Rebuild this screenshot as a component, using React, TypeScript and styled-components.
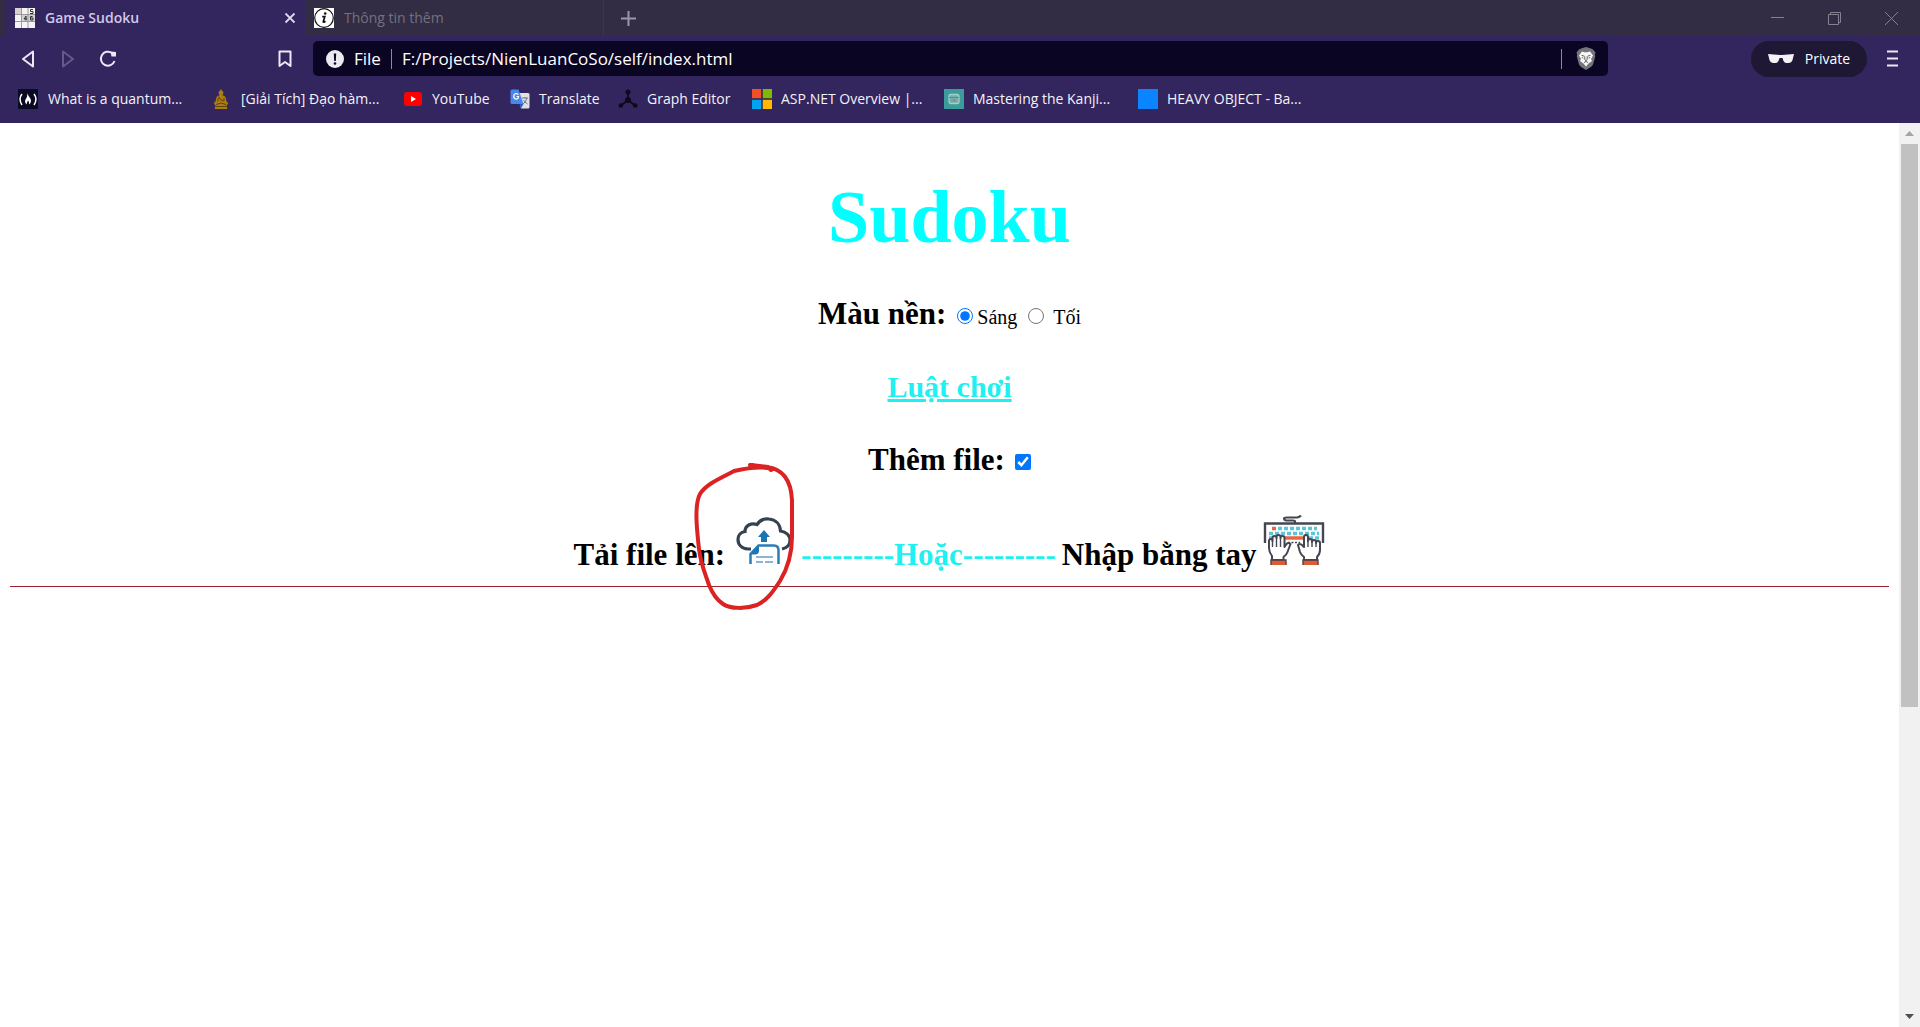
import React from "react";
import styled, { createGlobalStyle, css } from "styled-components";

const ui = `"Open Sans", "Noto Sans", sans-serif`;
const serif = `"Liberation Serif", "Times New Roman", serif`;

const Global = createGlobalStyle`
  *, *::before, *::after { box-sizing: border-box; }
  html, body, #root { height: 100%; }
  body { margin: 0; overflow: hidden; background: #fff; }
  button { border: 0; padding: 0; background: none; color: inherit; font: inherit; }
  svg { display: block; flex: none; }
`;

const Window = styled.div`
  display: flex;
  flex-direction: column;
  height: 100vh;
`;

const TabStrip = styled.header`
  display: flex;
  align-items: stretch;
  height: 36px;
  padding-left: 5px;
  background: #322d44;
  font-family: ${ui};
  font-size: 14px;
`;

const Tab = styled.div<{ $active?: boolean }>`
  display: flex;
  align-items: center;
  gap: 10px;
  width: ${(p) => (p.$active ? 300 : 299)}px;
  padding: 0 9px 1px 10px;
  color: ${(p) => (p.$active ? "#d2c8ea" : "#75707f")};
  font-weight: ${(p) => (p.$active ? 600 : 400)};
  background: ${(p) => (p.$active ? "#33255e" : "transparent")};
  ${(p) =>
    !p.$active &&
    css`
      padding-left: 9px;
      border-right: 1px solid #3b364c;
    `}
`;

const TabTitle = styled.span`
  flex: 1;
  white-space: nowrap;
`;

const IconButton = styled.button<{ $w?: number; $color?: string }>`
  display: flex;
  align-items: center;
  justify-content: center;
  width: ${(p) => p.$w ?? 40}px;
  height: 100%;
  color: ${(p) => p.$color ?? "#ece8f5"};
`;

const WindowControls = styled.div`
  display: flex;
  margin-left: auto;
`;

const Toolbar = styled.div`
  display: flex;
  align-items: center;
  height: 45px;
  padding: 0 8px;
  background: #33255e;
  font-family: ${ui};
`;

const BookmarkSlot = styled.div`
  display: flex;
  justify-content: flex-end;
  flex: 1;
  min-width: 60px;
  max-width: 185px;
  height: 100%;
`;

const AddressBar = styled.form`
  display: flex;
  align-items: center;
  flex: 1;
  height: 35px;
  padding: 0 12px 0 13px;
  gap: 10px;
  border-radius: 5px;
  background: #0b0524;
  color: #fff;
  font-size: 17px;
`;

const Divider = styled.span<{ $right?: number }>`
  width: 1px;
  height: 20px;
  margin-right: ${(p) => p.$right ?? 0}px;
  background: #8d889b;
`;

const Address = styled.input`
  flex: 1;
  min-width: 0;
  border: 0;
  padding: 0;
  outline: 0;
  background: none;
  color: #fff;
  font: inherit;
`;

const ToolbarEnd = styled.div`
  display: flex;
  align-items: center;
  justify-content: flex-end;
  width: 304px;
  height: 100%;
`;

const PrivateBadge = styled.button`
  display: flex;
  align-items: center;
  justify-content: center;
  gap: 11px;
  width: 116px;
  height: 36px;
  margin-right: 5px;
  border-radius: 18px;
  background: #1e1834;
  color: #fff;
  font-size: 14px;
`;

const Bookmarks = styled.nav`
  display: flex;
  align-items: center;
  height: 42px;
  padding: 0 17px 7px;
  background: #33255e;
  font-family: ${ui};
  font-size: 14px;
`;

const Bookmark = styled.a<{ $w: number }>`
  display: flex;
  align-items: center;
  gap: 9px;
  width: ${(p) => p.$w}px;
  color: #f4f2f9;
  text-decoration: none;
  white-space: nowrap;
`;

const Viewport = styled.div`
  display: flex;
  flex: 1;
  min-height: 0;
`;

const Page = styled.main`
  display: flex;
  flex-direction: column;
  align-items: center;
  flex: 1;
  padding: 52px 10px 0;
  color: #000;
  font-family: ${serif};
`;

const Title = styled.h1`
  margin: 0 0 37px;
  color: #0ff;
  font-size: 74px;
  line-height: 84px;
`;

const Row = styled.div`
  display: flex;
  align-items: baseline;
  justify-content: center;
  height: 36px;
  margin-bottom: 37px;
  font-size: 31px;
  font-weight: 700;
  line-height: 36px;
`;

const ThemeGroup = styled(Row)`
  gap: 11px;
`;

const Heading = styled.h2`
  margin: 0;
  font-size: inherit;
`;

const Option = styled.label<{ $gap: number }>`
  display: flex;
  align-items: baseline;
  gap: ${(p) => p.$gap}px;
  font-size: 20px;
  font-weight: 400;
`;

const Radio = styled.input`
  width: 16px;
  height: 16px;
  margin: 0;
  accent-color: #0075ff;
`;

const Check = styled.input`
  width: 16px;
  height: 16px;
  margin: 0 0 0 10px;
  accent-color: #0075ff;
`;

const RulesLink = styled.a`
  color: #1ff0f0;
  font-size: 30px;
`;

const InputRow = styled(Row)`
  height: auto;
  margin-bottom: 13px;
`;

const Or = styled.span`
  margin-right: 6px;
  color: #1ff0f0;
`;

const PictureButton = styled.button<{ $left: number; $right: number }>`
  position: relative;
  display: inline-block;
  margin: 0 ${(p) => p.$right}px 0 ${(p) => p.$left}px;
  line-height: 0;
  svg { display: inline-block; vertical-align: baseline; }
`;

const Marker = styled.svg`
  position: absolute;
  left: -42px;
  top: -54px;
  pointer-events: none;
`;

const Rule = styled.hr`
  align-self: stretch;
  height: 1px;
  margin: 0;
  border: 0;
  background: #962531;
`;

const Scrollbar = styled.div`
  display: flex;
  flex-direction: column;
  align-items: center;
  width: 21px;
  background: #f1f1f1;
`;

const ScrollArrow = styled.button`
  display: flex;
  align-items: center;
  justify-content: center;
  width: 21px;
  height: 21px;
`;

const Track = styled.div`
  display: flex;
  flex: 1;
  justify-content: center;
  width: 100%;
`;

const Thumb = styled.div`
  width: 17px;
  height: 65.3%;
  background: #c1c1c1;
`;

const SudokuIcon = () => (
  <svg width="20" height="20" viewBox="0 0 20 20">
    <rect width="20" height="20" fill="#f4f4f4" />
    <rect width="6" height="6" fill="#d9cfcf" />
    <rect x="7" y="7" width="6" height="6" fill="#d2d2d2" />
    <rect x="13" y="7" width="7" height="6" fill="#d2d2d2" />
    <path d="M6.500 0v20M13 0v20M0 6.500h20M0 13.500h20" stroke="#999" />
    <path d="M18 1.500h-2.500v2H18v2h-3M11 12.500V8l-2 3h3M17.500 8.500h-2v3.500h2.500v-2h-2" stroke="#333" fill="none" />
  </svg>
);

const InfoIcon = () => (
  <svg width="20" height="20" viewBox="0 0 20 20">
    <rect width="20" height="20" fill="#fff" />
    <circle cx="10" cy="10" r="9.300" fill="#fff" stroke="#111" strokeWidth="1.200" />
    <circle cx="11.200" cy="5.500" r="1.300" fill="#111" />
    <path d="M8.200 8.700h2.600L9.300 13.500q-.3 1.500 2.200-.3" fill="none" stroke="#111" strokeWidth="1.700" />
  </svg>
);

const CloseIcon = () => (
  <svg width="12" height="12" viewBox="0 0 12 12" stroke="#ddd6ee" strokeWidth="1.800">
    <path d="M1.500 1.500l9 9M10.500 1.500l-9 9" />
  </svg>
);

const ShieldLion = () => (
  <svg width="20" height="23" viewBox="0 0 20 23">
    <path d="M5 1.500L10 0l5 1.500 2 1 2.500 3-.6 2 .3 2-2.200 8q-.7 2-7 5.500-6.300-3.500-7-5.500l-2.200-8 .3-2-.6-2L3 2.500z" fill="#75747b" />
    <path d="M6 4.500l2.500.8h3L14 4.500l3 4-2 3.500 1 2-3.500 2.500L10 19.500l-2.500-3L4 14l1-2-2-3.500z" fill="#f8f8f9" />
    <path d="M5.500 8.300l3 .9M14.500 8.300l-3 .9M8.800 9.500v3.200L10 13.800l1.200-1.100V9.500M8 15.700l2-1.400 2 1.400M5.800 10.500l1.500.6M14.200 10.500l-1.500.6" fill="none" stroke="#5f5e66" />
  </svg>
);

const CloudUpload = () => (
  <svg width="56" height="48" viewBox="0 0 56 48" fill="none">
    <path d="M15 32H12C5.500 31.500 2 27.500 2 22.500 2 18 5 15 9 14.500 9 8.500 15 5.500 21 7.500 24 3 29 1.500 33 2c6.500.6 11 5 11.500 12 5.500 1 9.500 4.500 9.500 9.500 0 4-3 7.500-8 8.500" stroke="#36424f" strokeWidth="3.200" />
    <path d="M28 13l6 7h-3v5h-6v-5h-3z" fill="#1d74b5" />
    <path d="M14.500 47V37l8-8.500H38q4.500 0 4.500 5V47" stroke="#2b7db8" strokeWidth="2.500" />
    <path d="M14 37.500l9-9v5q0 4-4 4z" fill="#1d74b5" />
    <path d="M20 40h17M20 45h7M29 45h8" stroke="#6b9cc2" strokeWidth="1.600" />
  </svg>
);

const KeyboardHands = () => (
  <svg width="62" height="50" viewBox="0 0 62 50" fill="none">
    <path d="M32 8V6.500q0-1-2-1h-7q-2-.5-2-2 0-1 3-1h10q2 0 4-2" stroke="#454652" strokeWidth="2.200" />
    <path d="M2 28V8.500h58V28" stroke="#454652" strokeWidth="2.400" />
    <path d="M15 13.500h39" stroke="#5cc5da" strokeWidth="3.500" strokeDasharray="4 2" />
    <path d="M9 13.500h4" stroke="#e9673f" strokeWidth="3.500" />
    <path d="M6 18.500h50M6 23h4M46 23h10" stroke="#5cc5da" strokeWidth="3.300" strokeDasharray="4 2" />
    <path d="M22 23h18" stroke="#e9673f" strokeWidth="3.500" />
    <path d="M25 27.500h12" stroke="#454652" strokeWidth="1.500" strokeDasharray="2 1.500" />
    <path d="M9 45v-4q-3-4-3-8v-7q0-2 1.700-2t1.800 2v-3q0-2 2-2t2 2v-1q0-2 2-2t2 2v1q0-2 2-2t2 2v9l2-3q2-2 4 0l-3 8q-1 3-4 5v3z" fill="#fff" stroke="#454652" strokeWidth="2" strokeLinejoin="round" />
    <path d="M9.500 26v6M13.500 23v9M17.500 23v9" stroke="#454652" strokeWidth="1.400" />
    <path d="M41 45v-3q-3-2-4-5l-2-7q1-2 4 0l2 2V22q0-2 2-2t2 2v4q0-2 2-2t2 2v1q0-2 2-2t2 2v1q0-2 2-2t2 2v7q0 4-3 7v3z" fill="#fff" stroke="#454652" strokeWidth="2" strokeLinejoin="round" />
    <path d="M45 25v7M49 26v6M53 27v5" stroke="#454652" strokeWidth="1.400" />
    <path d="M8 45.500h15V50H8zM40 45.500h15V50H40z" fill="#df5a36" />
    <path d="M8 50v-5h15v5M40 50v-5h15v5" stroke="#5a3f42" strokeWidth="1.400" />
  </svg>
);

const bookmarks = [
  {
    title: "What is a quantum...", w: 193,
    icon: (
      <svg width="22" height="20" viewBox="0 0 22 20">
        <rect x="1" width="20" height="20" fill="#0a0a23" />
        <path d="M5 5q-4 5 0 11M17 5q4 5 0 11" fill="none" stroke="#fff" strokeWidth="1.500" />
        <path d="M10.500 4.500q1 3 2.500 4.500 2 3 0 5.500l-1 1q.5-3-1-4-1.500 2-1 4-3-2-1.500-5 2-3 2-6z" fill="#fff" />
      </svg>
    ),
  },
  {
    title: "[Giải Tích] Đạo hàm...", w: 193,
    icon: (
      <svg width="22" height="22" viewBox="0 0 22 22">
        <path d="M10.300 2.200L11 .5l.7 1.700q2 .8 1.700 3l-.9 2q3 .6 3.500 3.300l.4 3q1.600.5 1.600 2 0 1.200-1.500 1.500l.8 4H4.700l.8-4Q4 16.700 4 15.500q0-1.500 1.600-2l.4-3q.5-2.700 3.500-3.300l-.9-2q-.3-2.200 1.700-3z" fill="#ab7c12" />
        <path d="M8.500 8.500q1.500 4 5 4.500M8 10v3.500M14 10v3M6 16.500q5-3 10 0M5.500 18.500h11" fill="none" stroke="#5e420b" />
      </svg>
    ),
  },
  {
    title: "YouTube", w: 107,
    icon: (
      <svg width="20" height="16" viewBox="0 0 20 16">
        <rect x="1" y="1" width="18" height="14" rx="3" fill="#f00" />
        <path d="M8 5l5 3-5 3z" fill="#fff" />
      </svg>
    ),
  },
  {
    title: "Translate", w: 108,
    icon: (
      <svg width="20" height="20" viewBox="0 0 20 20">
        <path d="M8 4h10q1.500 0 1.500 1.500V18q0 1.500-1.500 1.500h-7z" fill="#dfe1e5" />
        <path d="M2 .5h6.500L13.500 15H2Q.5 15 .5 13.500V2Q.5.500 2 .5z" fill="#4a86ee" />
        <path d="M11 19.500l2.500-4.500h-4z" fill="#2a5fc0" />
        <path d="M8.500 5.500q-3-2-4.500.5-1 3 1.500 4 3 .3 3-2.500H6.500" fill="none" stroke="#fff" strokeWidth="1.200" />
        <path d="M12 9h6M15 8v1M17 9q-1 4-4 6M13.500 11q1 2 4 4" fill="none" stroke="#6d7783" />
      </svg>
    ),
  },
  {
    title: "Graph Editor", w: 134,
    icon: (
      <svg width="20" height="20" viewBox="0 0 20 20">
        <path d="M10 3v8L3 16.500M10 11l7 5.500" fill="none" stroke="#0d0a1d" strokeWidth="1.800" />
        <g fill="#0d0a1d"><circle cx="10" cy="3" r="2.500" /><circle cx="10" cy="11" r="3" /><circle cx="2.800" cy="16.500" r="2.300" /><circle cx="17.200" cy="16.500" r="2.300" /></g>
      </svg>
    ),
  },
  {
    title: "ASP.NET Overview |...", w: 192,
    icon: (
      <svg width="20" height="20" viewBox="0 0 20 20">
        <path d="M0 0h9.200v9.200H0z" fill="#f25022" /><path d="M10.800 0H20v9.200h-9.200z" fill="#7fba00" />
        <path d="M0 10.800h9.200V20H0z" fill="#00a4ef" /><path d="M10.800 10.800H20V20h-9.200z" fill="#ffb900" />
      </svg>
    ),
  },
  {
    title: "Mastering the Kanji...", w: 194,
    icon: (
      <svg width="20" height="20" viewBox="0 0 20 20">
        <rect width="20" height="20" fill="#3c9c9c" />
        <rect x="5" y="5.500" width="10" height="9" rx="2" fill="#6bb0ac" stroke="#a5cfca" strokeWidth="1.300" />
        <path d="M5 8.500h10" stroke="#3c9c9c" /><circle cx="10" cy="11.500" r="1.500" fill="#b37f76" />
      </svg>
    ),
  },
  {
    title: "HEAVY OBJECT - Ba...", w: 193,
    icon: <svg width="20" height="20" viewBox="0 0 20 20"><rect width="20" height="20" fill="#0a84ff" /></svg>,
  },
];

export default function App() {
  return (
    <Window>
      <Global />
      <TabStrip>
        <Tab $active>
          <SudokuIcon />
          <TabTitle>Game Sudoku</TabTitle>
          <IconButton $w={12} aria-label="Close tab"><CloseIcon /></IconButton>
        </Tab>
        <Tab>
          <InfoIcon />
          <TabTitle>Thông tin thêm</TabTitle>
        </Tab>
        <IconButton $w={49} $color="#9b97a8" aria-label="New tab">
          <svg width="15" height="15" viewBox="0 0 15 15" stroke="currentColor" strokeWidth="2"><path d="M7.500 0v15M0 7.500h15" /></svg>
        </IconButton>
        <WindowControls>
          <IconButton $w={57} $color="#85818f" aria-label="Minimize">
            <svg width="13" height="13" viewBox="0 0 13 13" stroke="currentColor"><path d="M0 5.500h13" /></svg>
          </IconButton>
          <IconButton $w={57} $color="#85818f" aria-label="Restore">
            <svg width="13" height="13" viewBox="0 0 13 13" stroke="currentColor" fill="none"><path d="M.5 2.500h10v10H.5zM2.500 2.500v-2h10v10h-2" /></svg>
          </IconButton>
          <IconButton $w={57} $color="#85818f" aria-label="Close window">
            <svg width="13" height="13" viewBox="0 0 13 13" stroke="currentColor"><path d="M0 0l13 13M13 0L0 13" /></svg>
          </IconButton>
        </WindowControls>
      </TabStrip>
      <Toolbar>
        <IconButton aria-label="Back">
          <svg width="14" height="18" viewBox="0 0 14 18" fill="none" stroke="currentColor" strokeWidth="2" strokeLinejoin="round"><path d="M12 1.500v15L2 9z" /></svg>
        </IconButton>
        <IconButton $color="#67598a" aria-label="Forward">
          <svg width="14" height="18" viewBox="0 0 14 18" fill="none" stroke="currentColor" strokeWidth="2" strokeLinejoin="round"><path d="M2 1.500v15L12 9z" /></svg>
        </IconButton>
        <IconButton aria-label="Reload">
          <svg width="18" height="18" viewBox="0 0 18 18" fill="none" stroke="currentColor" strokeWidth="2"><path d="M13 3A7 7 0 1 0 15.500 11" /><path d="M11.500 1.500l5.500.5v4.500l-4.500 0z" fill="currentColor" stroke="none" /></svg>
        </IconButton>
        <BookmarkSlot>
          <IconButton $w={56} aria-label="Bookmark this page">
            <svg width="14" height="18" viewBox="0 0 14 18" fill="none" stroke="currentColor" strokeWidth="2" strokeLinejoin="round"><path d="M1.500 1.500h11v14.500L7 12l-5.500 4z" /></svg>
          </IconButton>
        </BookmarkSlot>
        <AddressBar>
          <svg width="18" height="18" viewBox="0 0 18 18"><circle cx="9" cy="9" r="9" fill="#eceaf0" /><path d="M7.800 3.500h2.400L9.800 11H8.200z" fill="#0b0524" /><circle cx="9" cy="13.500" r="1.300" fill="#0b0524" /></svg>
          <span>File</span>
          <Divider />
          <Address aria-label="Address" defaultValue="F:/Projects/NienLuanCoSo/self/index.html" />
          <Divider $right={4} />
          <ShieldLion />
        </AddressBar>
        <ToolbarEnd>
          <PrivateBadge>
            <svg width="26" height="10" viewBox="0 0 26 10"><path d="M0 0l12 1h2l12-1-1.500 6q-1 3-4 3h-2q-3 0-4-5h-3q-1 5-4 5h-2Q2.500 9 1.500 6z" fill="#f3f2f6" /></svg>
            Private
          </PrivateBadge>
          <IconButton aria-label="Menu">
            <svg width="11" height="17" viewBox="0 0 11 17" stroke="currentColor" strokeWidth="2"><path d="M0 1.500h11M0 8.500h11M0 15.500h11" /></svg>
          </IconButton>
        </ToolbarEnd>
      </Toolbar>
      <Bookmarks>
        {bookmarks.map((b) => (
          <Bookmark key={b.title} href="#" $w={b.w}>{b.icon}{b.title}</Bookmark>
        ))}
      </Bookmarks>
      <Viewport>
        <Page>
          <Title>Sudoku</Title>
          <ThemeGroup role="radiogroup" aria-labelledby="theme">
            <Heading id="theme">Màu nền:</Heading>
            <Option $gap={4}><Radio type="radio" name="theme" defaultChecked />Sáng</Option>
            <Option $gap={9}><Radio type="radio" name="theme" />Tối</Option>
          </ThemeGroup>
          <Row><RulesLink href="#">Luật chơi</RulesLink></Row>
          <Row>
            <label htmlFor="add-file">Thêm file:</label>
            <Check id="add-file" type="checkbox" defaultChecked />
          </Row>
          <InputRow>
            <span>Tải file lên:</span>
            <PictureButton $left={11} $right={9} aria-label="Tải file lên">
              <CloudUpload />
              <Marker width="104" height="150" viewBox="0 0 104 150" fill="none" stroke="#db2323" strokeWidth="4" strokeLinecap="round" strokeLinejoin="round">
                <path d="M56 2l18 2 3 3 2-1C68 3 53 5 40 8 27 15 12 21 6 31 0 42 3 68 5 86c2 16 6 24 10 36 4 10 8 15 14 19 7 5 23 5 34 1 11-5 17-15 23-24 9-15 12-30 12-44l0-37C97 17 89 6 73 4L57 2" />
              </Marker>
            </PictureButton>
            <Or>---------Hoặc---------</Or>
            <span>Nhập bằng tay</span>
            <PictureButton $left={7} $right={0} aria-label="Nhập bằng tay"><KeyboardHands /></PictureButton>
          </InputRow>
          <Rule />
        </Page>
        <Scrollbar>
          <ScrollArrow aria-label="Scroll up">
            <svg width="9" height="5" viewBox="0 0 9 5"><path d="M0 5h9L4.500 0z" fill="#a3a3a3" /></svg>
          </ScrollArrow>
          <Track><Thumb /></Track>
          <ScrollArrow aria-label="Scroll down">
            <svg width="9" height="5" viewBox="0 0 9 5"><path d="M0 0h9L4.500 5z" fill="#505050" /></svg>
          </ScrollArrow>
        </Scrollbar>
      </Viewport>
    </Window>
  );
}
